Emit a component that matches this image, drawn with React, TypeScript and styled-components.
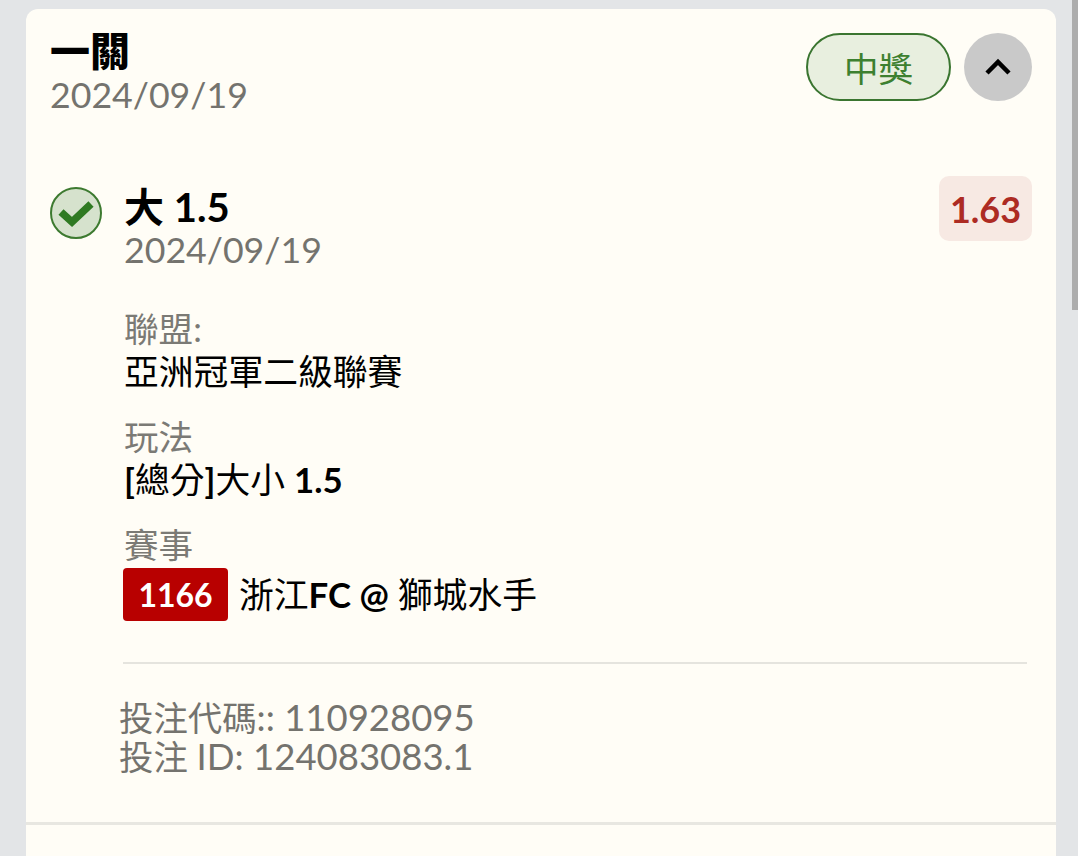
import React from "react";
import styled, { createGlobalStyle } from "styled-components";

const Global = createGlobalStyle`
  html, body { margin: 0; padding: 0; background: #e3e5e7; overflow: hidden; }
  body { font-family: Lato, "Noto Sans CJK TC", sans-serif; }
`;
const Page = styled.div`
  width: 1078px; height: 856px; overflow: hidden; position: relative;
  padding: 9px 22px 0 26px; box-sizing: border-box;
`;
const Scrollbar = styled.div`
  position: absolute; top: 0; right: 0; width: 6px; height: 310px; background: #adadad;
`;
const Card = styled.div`
  background: #fffdf6; border-radius: 12px 12px 0 0; height: 900px;
`;
const Section = styled.section`
  padding: 21px 24px 0 24px; height: 816px; box-sizing: border-box;
  border-bottom: 3px solid #e8e7e1;
`;
const Header = styled.header`
  display: flex; justify-content: space-between; align-items: flex-start;
`;
const Title = styled.div`
  font-size: 40px; line-height: 42px; font-weight: 900; color: #000;
`;
const DateText = styled.div`
  font-size: 35.7px; line-height: 40px; color: #74736e;
`;
const HeaderDate = styled(DateText)`
  margin-top: 3px;
`;
const Actions = styled.div`
  display: flex; gap: 13px; margin-top: 3px; margin-right: 0;
`;
const Status = styled.div`
  width: 145px; height: 68px; box-sizing: border-box; border-radius: 34px;
  border: 2px solid #3a7530; background: #e8efdf; color: #3d8030;
  display: flex; align-items: center; justify-content: center; font-size: 34.5px;
`;
const Toggle = styled.div`
  width: 68px; height: 68px; border-radius: 50%; background: #c9c9c9;
  display: flex; align-items: center; justify-content: center;
`;
const Leg = styled.div`
  display: flex; margin-top: 60px; align-items: flex-start;
`;
const Check = styled.div`
  width: 52px; height: 52px; flex: none; margin-top: 12px; margin-right: 22px;
`;
const LegBody = styled.div`
  flex: 1; min-width: 0;
`;
const LegTop = styled.div`
  display: flex; justify-content: space-between; align-items: flex-start;
`;
const Pick = styled.div`
  font-size: 40px; line-height: 46px; font-weight: 700; color: #000; margin-top: 9px;
`;
const Odds = styled.div`
  width: 93px; height: 65px; margin-top: 1px; border-radius: 10px; background: #f7e9e3; color: #ad2b23;
  display: flex; align-items: center; justify-content: center; font-size: 36px; font-weight: 700;
`;
const Detail = styled.div<{ $gap: number }>`
  margin-top: ${(p) => p.$gap}px;
`;
const Label = styled.div`
  font-size: 34.6px; line-height: 40px; color: #7b7a75;
`;
const Value = styled.div`
  font-size: 34.8px; line-height: 46px; color: #000;
  display: flex; align-items: center;
  b { font-weight: 700; }
`;
const EventRow = styled(Value)`
  margin-top: 3px;
`;
const Code = styled.span`
  width: 105px; height: 53px; margin: 0 11px 0 -1px; border-radius: 4px; background: #b80000;
  color: #fff; font-weight: 700; font-size: 32px; display: inline-flex;
  align-items: center; justify-content: center;
`;
const Divider = styled.div`
  height: 2px; background: #e5e4de; margin: 41px 5px 0 -1px;
`;
const Meta = styled.div`
  margin: 34px 0 0 -5px; font-size: 34.4px; color: #74736e;
`;
const MetaLine = styled.div`
  height: 39px; line-height: 39px;
`;
const MetaNumber = styled.span`
  font-size: 36.5px; line-height: 1;
`;

export default function App() {
  return (
    <Page>
      <Global />
      <Card>
        <Section>
          <Header>
            <div>
              <Title>一關</Title>
              <HeaderDate>2024/09/19</HeaderDate>
            </div>
            <Actions>
              <Status>中獎</Status>
              <Toggle>
                <svg width="28" height="18" viewBox="0 0 28 18" fill="none">
                  <path d="M3 15 L14 4 L25 15" stroke="#000" strokeWidth="4.5" />
                </svg>
              </Toggle>
            </Actions>
          </Header>
          <Leg>
            <Check>
              <svg width="52" height="52" viewBox="0 0 52 52">
                <circle cx="26" cy="26" r="25" fill="#d6e2cd" stroke="#3d7a30" strokeWidth="2" />
                <path d="M11 25 L22 35 L41 17" fill="none" stroke="#2f7a22" strokeWidth="7.5" />
              </svg>
            </Check>
            <LegBody>
              <LegTop>
                <div>
                  <Pick>大 1.5</Pick>
                  <DateText>2024/09/19</DateText>
                </div>
                <Odds>1.63</Odds>
              </LegTop>
              <Detail $gap={39}>
                <Label>聯盟:</Label>
                <Value>亞洲冠軍二級聯賽</Value>
              </Detail>
              <Detail $gap={22}>
                <Label>玩法</Label>
                <Value><span><b>[</b>總分<b>]</b>大小 <b>1.5</b></span></Value>
              </Detail>
              <Detail $gap={22}>
                <Label>賽事</Label>
                <EventRow>
                  <Code>1166</Code>
                  <span>浙江<b>FC @</b> 獅城水手</span>
                </EventRow>
              </Detail>
              <Divider />
              <Meta>
                <MetaLine>投注代碼<MetaNumber>:: 110928095</MetaNumber></MetaLine>
                <MetaLine>投注 <MetaNumber>ID: 124083083.1</MetaNumber></MetaLine>
              </Meta>
            </LegBody>
          </Leg>
        </Section>
      </Card>
      <Scrollbar />
    </Page>
  );
}
